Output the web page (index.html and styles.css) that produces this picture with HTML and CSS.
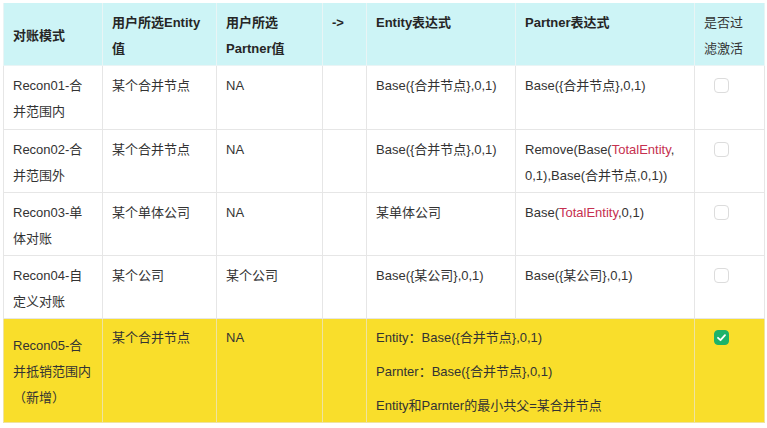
FILE: index.html
```html
<!DOCTYPE html>
<html lang="zh-CN">
<head>
<meta charset="utf-8">
<link rel="stylesheet" href="styles.css">
</head>
<body>
<table class="recon">
  <colgroup>
    <col class="c1"><col class="c2"><col class="c3"><col class="c4"><col class="c5"><col class="c6"><col class="c7">
  </colgroup>
  <thead>
    <tr class="head">
      <th class="mid">对账模式</th>
      <th>用户所选Entity值</th>
      <th>用户所选Partner值</th>
      <th>-&gt;</th>
      <th>Entity表达式</th>
      <th>Partner表达式</th>
      <th class="normal">是否过滤激活</th>
    </tr>
  </thead>
  <tbody>
    <tr class="row first">
      <td>Recon01-合并范围内</td>
      <td>某个合并节点</td>
      <td>NA</td>
      <td></td>
      <td>Base({合并节点},0,1)</td>
      <td>Base({合并节点},0,1)</td>
      <td><span class="box"></span></td>
    </tr>
    <tr class="row">
      <td>Recon02-合并范围外</td>
      <td>某个合并节点</td>
      <td>NA</td>
      <td></td>
      <td>Base({合并节点},0,1)</td>
      <td>Remove(Base(<span class="red">TotalEntity</span>,<br>0,1),Base(合并节点,0,1))</td>
      <td><span class="box"></span></td>
    </tr>
    <tr class="row">
      <td>Recon03-单体对账</td>
      <td>某个单体公司</td>
      <td>NA</td>
      <td></td>
      <td>某单体公司</td>
      <td>Base(<span class="red">TotalEntity</span>,0,1)</td>
      <td><span class="box"></span></td>
    </tr>
    <tr class="row">
      <td>Recon04-自定义对账</td>
      <td>某个公司</td>
      <td>某个公司</td>
      <td></td>
      <td>Base({某公司},0,1)</td>
      <td>Base({某公司},0,1)</td>
      <td><span class="box"></span></td>
    </tr>
    <tr class="row hl">
      <td class="mid">Recon05-合并抵销范围内（新增）</td>
      <td>某个合并节点</td>
      <td>NA</td>
      <td></td>
      <td colspan="2">
        <p>Entity：Base({合并节点},0,1)</p>
        <p>Parnter：Base({合并节点},0,1)</p>
        <p>Entity和Parnter的最小共父=某合并节点</p>
      </td>
      <td><span class="box checked"><svg viewBox="0 0 15 15" width="15" height="15"><path d="M4 7.8 L6.5 10.2 L11 5.2" fill="none" stroke="#fff" stroke-width="1.8" stroke-linecap="round" stroke-linejoin="round"/></svg></span></td>
    </tr>
  </tbody>
</table>
</body>
</html>
```

FILE: styles.css
```css
html, body {
  margin: 0;
  padding: 0;
  background: #fff;
}
body {
  padding: 3px 0 0 3px;
  font-family: "Liberation Sans", "Noto Sans CJK SC", sans-serif;
  font-size: 13px;
  color: #333;
}
.recon {
  border-collapse: collapse;
  table-layout: fixed;
  width: 761px;
}
.c1 { width: 99px; }
.c2 { width: 114px; }
.c3 { width: 106px; }
.c4 { width: 44px; }
.c5 { width: 149px; }
.c6 { width: 179px; }
.c7 { width: 70px; }
.recon th,
.recon td {
  border: 1px solid #e6e6e6;
  padding: 7px 9px 3px;
  line-height: 26px;
  text-align: left;
  vertical-align: top;
  word-break: break-all;
}
.recon th {
  background: #cdf4f6;
  color: #262626;
  font-weight: bold;
  border-color: #e9f4f5;
  word-break: normal;
}
.recon th.normal {
  font-weight: normal;
  color: #333;
  word-break: break-all;
}
.recon .mid {
  vertical-align: middle;
}
.head th {
  height: 52px;
  border-top: none;
}
.row td {
  height: 52px;
}
.recon .first td {
  padding-bottom: 4px;
}
.recon .hl td {
  background: #f9de2b;
  height: 95px;
  padding-top: 6px;
  padding-bottom: 2px;
  border-color: #efe3a0;
}
.recon .hl td.mid {
  padding-top: 4px;
}
.hl p {
  margin: 0 0 8px;
}
.hl p:last-child {
  margin-bottom: 0;
}
.red {
  color: #c6304f;
}
.box {
  display: inline-block;
  box-sizing: border-box;
  width: 15px;
  height: 15px;
  margin-left: 10px;
  border: 1px solid #dcdcdc;
  border-radius: 4px;
  background: #fff;
  vertical-align: middle;
  position: relative;
  top: -1px;
}
.box.checked {
  background: #1db369;
  border-color: #1db369;
}
.box.checked svg {
  display: block;
  margin: -1px;
}
```
